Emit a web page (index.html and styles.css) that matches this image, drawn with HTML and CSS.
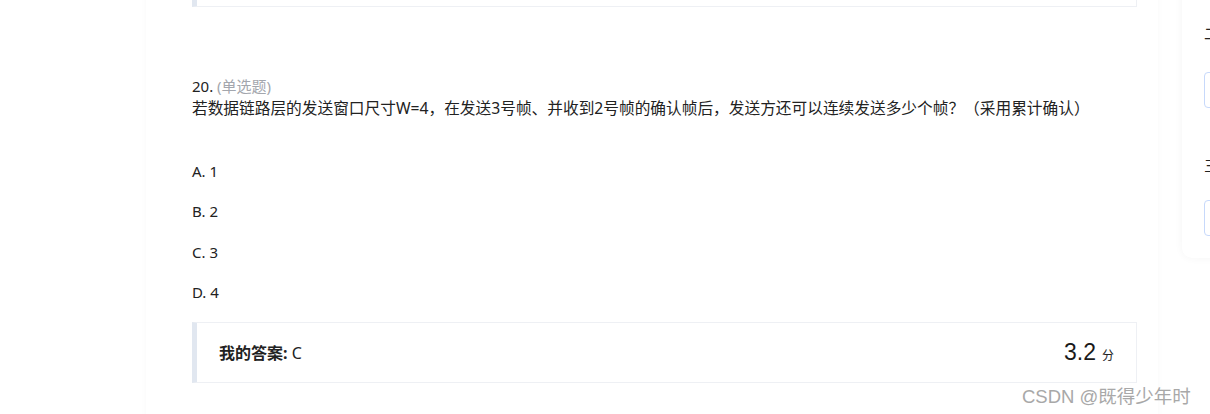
FILE: index.html
```html
<!DOCTYPE html>
<html lang="zh-CN">
<head>
<meta charset="utf-8">
<title>单选题</title>
<link rel="stylesheet" href="styles.css">
</head>
<body>
<div class="page">
  <main class="paper">
    <div class="answer-box prev"></div>
    <section class="question">
      <div class="q-head"><span class="q-num">20.</span> <span class="q-type">(单选题)</span></div>
      <div class="q-text">若数据链路层的发送窗口尺寸W=4，在发送3号帧、并收到2号帧的确认帧后，发送方还可以连续发送多少个帧？（采用累计确认）</div>
      <ul class="options">
        <li>A. 1</li>
        <li>B. 2</li>
        <li>C. 3</li>
        <li>D. 4</li>
      </ul>
      <div class="answer-box">
        <div class="my-answer"><b>我的答案:</b> C</div>
        <div class="score"><span class="score-num">3.2</span><span class="score-unit">分</span></div>
      </div>
    </section>
  </main>
  <aside class="sidebar">
    <div class="side-title">二. 多选题</div>
    <div class="side-grid"><span class="cell"></span></div>
    <div class="side-title t2">三. 判断题</div>
    <div class="side-grid g2"><span class="cell"></span></div>
  </aside>
</div>
<div class="watermark">CSDN @既得少年时</div>
</body>
</html>
```

FILE: styles.css
```css
html, body {
  margin: 0;
  padding: 0;
  background: #fff;
  overflow: hidden;
  height: 414px;
}
body {
  font-family: "Noto Sans", "Noto Sans CJK SC", sans-serif;
  color: #222;
  position: relative;
}
.page {
  display: flex;
  align-items: flex-start;
  gap: 24px;
  padding-left: 146px;
  margin-top: -60px;
}
.paper {
  width: 1012px;
  flex: none;
  background: #fff;
  box-shadow: 0 0 6px rgba(0, 0, 0, 0.035);
  padding: 0 21px 40px 46px;
  box-sizing: border-box;
  min-height: 520px;
}
.answer-box {
  border: 1px solid #eef0f4;
  border-left: 5px solid #e1e7f0;
  display: flex;
  align-items: center;
  justify-content: space-between;
  height: 59px;
  padding: 0 22px 0 22px;
}
.answer-box.prev {
  height: 65px;
}
.question {
  padding-top: 68px;
}
.q-head {
  font-size: 15px;
  line-height: 22px;
}
.q-type {
  color: #a3a6ad;
}
.q-text {
  font-size: 15.7px;
  line-height: 22px;
}
.options {
  list-style: none;
  margin: 41px 0 0;
  padding: 0;
}
.options li {
  font-size: 15px;
  line-height: 22px;
  margin-bottom: 18.3px;
}
.options li:last-child {
  margin-bottom: 19px;
}
.my-answer {
  font-size: 16px;
}
.my-answer b {
  font-weight: 700;
}
.score {
  display: flex;
  align-items: baseline;
  gap: 6px;
}
.score-num {
  font-family: "Liberation Sans", sans-serif;
  font-size: 23px;
  color: #1a1a1a;
}
.score-unit {
  font-size: 12px;
}
.sidebar {
  width: 300px;
  height: 318px;
  flex: none;
  background: #fff;
  border-radius: 10px;
  box-shadow: 0 0 8px rgba(0, 0, 0, 0.045);
  padding: 0 0 0 22px;
  box-sizing: border-box;
}
.side-title {
  font-size: 15px;
  line-height: 22px;
  margin-top: 82px;
}
.side-title.t2 {
  margin-top: 46px;
}
.side-grid {
  margin-top: 28px;
  height: 36px;
}
.side-grid.g2 {
  margin-top: 24px;
}
.cell {
  display: inline-block;
  width: 36px;
  height: 36px;
  box-sizing: border-box;
  border: 1px solid #c7d9fb;
  border-radius: 4px;
}
.watermark {
  position: absolute;
  left: 1022px;
  top: 385px;
  font-size: 18.5px;
  line-height: 24px;
  color: #a8a8a8;
  text-shadow: 0 0 1px #fff;
  font-family: "Liberation Sans", "Noto Sans CJK SC", sans-serif;
  white-space: nowrap;
}
```
